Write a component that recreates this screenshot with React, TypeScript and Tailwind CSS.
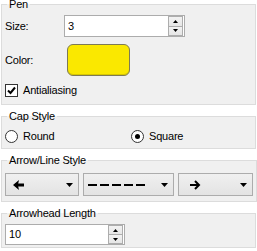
import type { ReactNode } from 'react';

function GroupBox({ title, className, children }: { title: string; className: string; children: ReactNode }) {
  return (
    <fieldset className={`border border-[#dcdcdc] bg-[#f0f0f0] px-[3px] ${className}`}>
      <legend className="ml-[2px] px-[2px] leading-[9px] text-black">{title}</legend>
      {children}
    </fieldset>
  );
}

function SpinArrow({ up }: { up: boolean }) {
  return (
    <svg width="5" height="3" viewBox="0 0 5 3">
      <path d={up ? 'M2.5 0L5 3H0Z' : 'M0 0H5L2.5 3Z'} fill="#000" />
    </svg>
  );
}

function SpinBox({ value, className }: { value: string; className: string }) {
  return (
    <div className={`flex border border-[#acacac] bg-white ${className}`}>
      <span className="flex-1 flex items-center pl-[3px] text-black">{value}</span>
      <div className="flex flex-col w-[15px] mr-px">
        <div className="flex-1 flex items-center justify-center border border-[#adadad] bg-[linear-gradient(#f2f2f2,#e6e6e6)]">
          <SpinArrow up />
        </div>
        <div className="flex-1 flex items-center justify-center border border-t-0 border-[#adadad] bg-[linear-gradient(#f2f2f2,#e6e6e6)]">
          <SpinArrow up={false} />
        </div>
      </div>
    </div>
  );
}

function Combo({ className, children }: { className: string; children: ReactNode }) {
  return (
    <div className={`flex items-center h-[23px] border border-[#acacac] bg-[linear-gradient(#f0f0f0,#e3e3e3)] ${className}`}>
      <div className="flex-1 flex items-center">{children}</div>
      <svg width="7" height="4" viewBox="0 0 7 4" className="mr-[5px]">
        <path d="M0 0H7L3.5 4Z" fill="#000" />
      </svg>
    </div>
  );
}

export default function App() {
  return (
    <div className="w-[257px] h-[251px] bg-white px-px text-[11px] tracking-[-0.2px] text-black font-['Liberation_Sans',Arial,sans-serif]">
      <GroupBox title="Pen" className="pt-[6px] pb-[7px]">
        <div className="grid grid-cols-[59px_1fr] items-center">
          <span>Size:</span>
          <SpinBox value="3" className="w-[121px] h-[22px]" />
        </div>
        <div className="grid grid-cols-[59px_1fr] items-center mt-[7px]">
          <span>Color:</span>
          <div className="ml-[3px] w-[63px] h-[32px] rounded-[6px] border border-[#7d7a55] bg-[#fae800] shadow-[inset_0_-1px_0_#d8c800]" />
        </div>
        <label className="flex items-center gap-[5px] mt-[8px] h-[13px]">
          <span className="flex items-center justify-center w-[13px] h-[13px] border border-[#333] bg-white">
            <svg width="9" height="9" viewBox="0 0 9 9">
              <path d="M1 4.5L3.5 7L8 1.5" fill="none" stroke="#000" strokeWidth="2" />
            </svg>
          </span>
          <span>Antialiasing</span>
        </label>
      </GroupBox>

      <GroupBox title="Cap Style" className="mt-[7px] pt-[9px] pb-[5px]">
        <div className="flex items-center h-[13px]">
          <label className="flex items-center gap-[5px] w-[126px]">
            <span className="w-[13px] h-[13px] rounded-full border border-[#333] bg-white" />
            <span>Round</span>
          </label>
          <label className="flex items-center gap-[5px]">
            <span className="flex items-center justify-center w-[13px] h-[13px] rounded-full border border-[#333] bg-white">
              <span className="w-[5px] h-[5px] rounded-full bg-black" />
            </span>
            <span>Square</span>
          </label>
        </div>
      </GroupBox>

      <GroupBox title="Arrow/Line Style" className="mt-[7px] pt-[8px] pb-[5px]">
        <div className="flex gap-[4px]">
          <Combo className="w-[74px]">
            <svg width="11" height="10" viewBox="0 0 11 10" className="ml-[7px]">
              <path d="M0 5L6 0L5.2 3.5H11V6.5H5.2L6 10Z" fill="#000" />
            </svg>
          </Combo>
          <Combo className="w-[91px]">
            <svg width="58" height="2" viewBox="0 0 58 2" className="ml-[4px]">
              <path d="M0 0H9V2H0ZM12 0H21V2H12ZM24 0H33V2H24ZM36 0H45V2H36ZM48 0H57V2H48Z" fill="#000" />
            </svg>
          </Combo>
          <Combo className="w-[75px]">
            <svg width="11" height="10" viewBox="0 0 11 10" className="ml-[11px]">
              <path d="M0 5H9M5 1L9 5L5 9" fill="none" stroke="#000" strokeWidth="2" />
            </svg>
          </Combo>
        </div>
      </GroupBox>

      <GroupBox title="Arrowhead Length" className="mt-[7px] pt-[6px] pb-[2px]">
        <SpinBox value="10" className="w-[120px] h-[21px]" />
      </GroupBox>
    </div>
  );
}
